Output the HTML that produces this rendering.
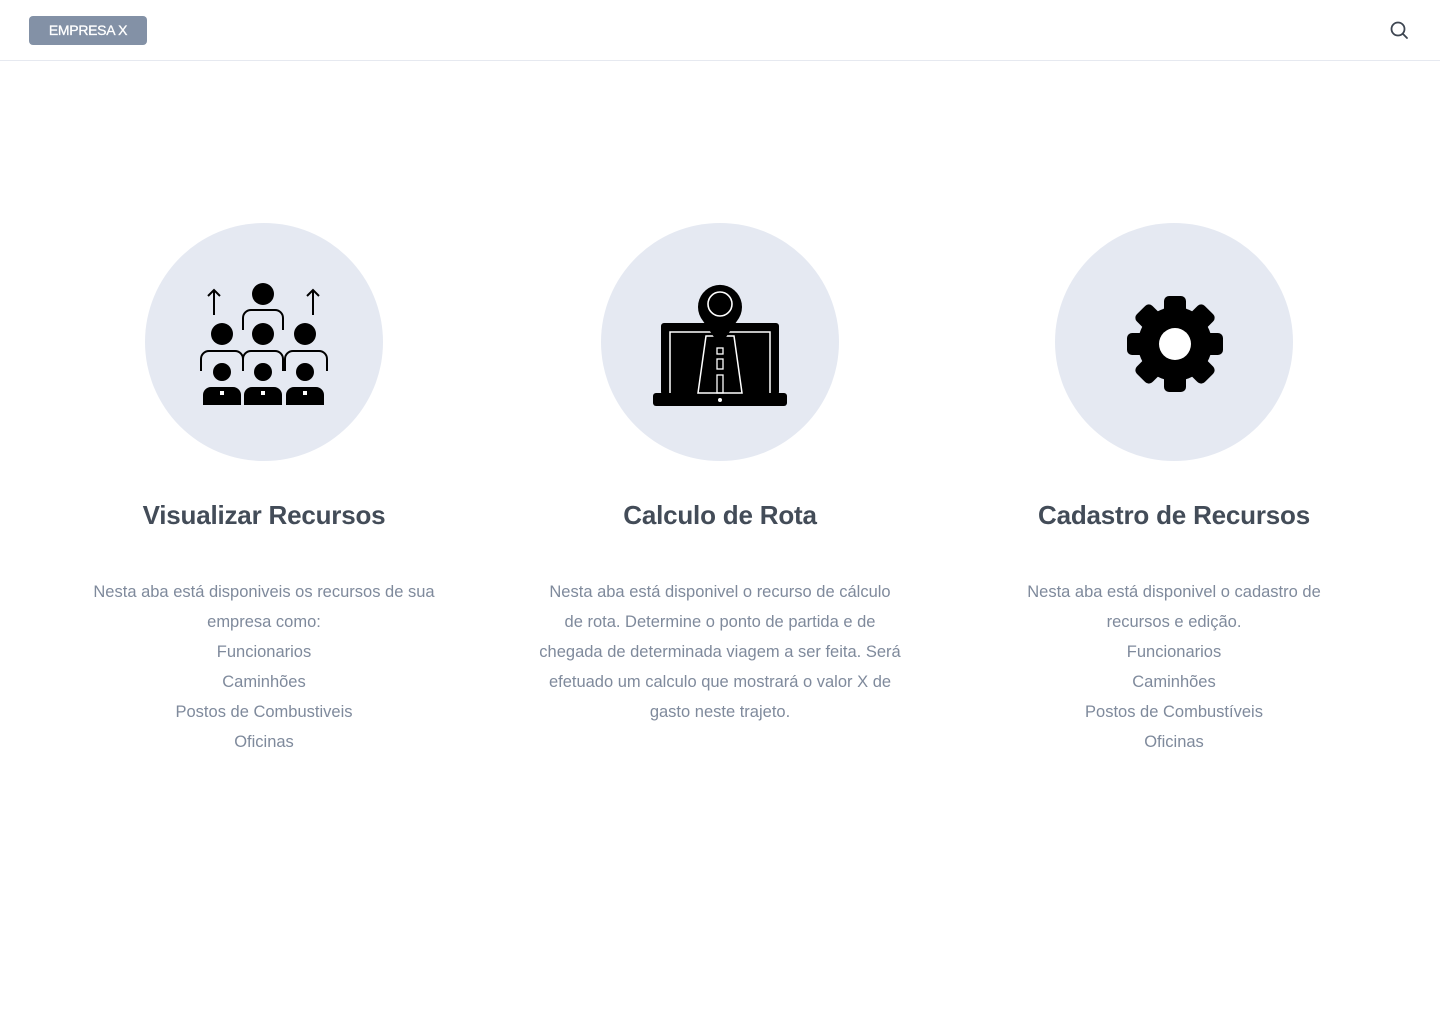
<!DOCTYPE html>
<html><head><meta charset="utf-8"><style>
*{margin:0;padding:0;box-sizing:border-box}
body{width:1440px;height:1024px;background:#fff;font-family:"Liberation Sans",sans-serif;position:relative;overflow:hidden}
.hdr{position:absolute;left:0;top:0;width:1440px;height:61px;border-bottom:1px solid #e6e9f0}
.brand{position:absolute;left:29px;top:16px;width:118px;height:29px;background:#8391a6;border-radius:4px;color:#fff;font-size:14px;line-height:29px;text-align:center;letter-spacing:-0.3px;-webkit-text-stroke:0.3px #fff}
.col{position:absolute;top:223px;width:420px;text-align:center}
.circ{width:238px;height:238px;border-radius:50%;background:#e5e9f2;margin:0 auto;position:relative}
.circ svg{position:absolute;left:0;top:0}
h2{margin-top:37px;font-size:26px;font-weight:bold;color:#434c58;line-height:34px;letter-spacing:-0.2px}
p{margin-top:45px;font-size:16.5px;color:#7f8a9c;line-height:30px}
</style></head><body>
<div class="hdr"><div class="brand">EMPRESA X</div>
<svg style="position:absolute;left:1388px;top:19px" width="22" height="22" viewBox="0 0 22 22"><circle cx="10" cy="10" r="6.5" fill="none" stroke="#3d4551" stroke-width="1.8"/><line x1="14.8" y1="14.8" x2="19" y2="19" stroke="#3d4551" stroke-width="1.8" stroke-linecap="round"/></svg>
</div>

<div class="col" style="left:54px">
<div class="circ"><svg width="238" height="238" viewBox="145 223 238 238">
<g fill="#000">
<circle cx="263" cy="294" r="11"/>
<circle cx="222" cy="334" r="11"/><circle cx="263" cy="334" r="11"/><circle cx="305" cy="334" r="11"/>
<circle cx="222" cy="372" r="9"/><circle cx="263" cy="372" r="9"/><circle cx="305" cy="372" r="9"/>
<path d="M203 405v-10a8 8 0 0 1 8-8h22a8 8 0 0 1 8 8v10z"/>
<path d="M244 405v-10a8 8 0 0 1 8-8h22a8 8 0 0 1 8 8v10z"/>
<path d="M286 405v-10a8 8 0 0 1 8-8h22a8 8 0 0 1 8 8v10z"/>
</g>
<g fill="#fff"><rect x="220" y="391" width="4" height="4"/><rect x="261" y="391" width="4" height="4"/><rect x="303" y="391" width="4" height="4"/></g>
<g fill="none" stroke="#000" stroke-width="2">
<path d="M243 330v-12a8 8 0 0 1 8-8h24a8 8 0 0 1 8 8v12"/>
<path d="M201 371v-12a8 8 0 0 1 8-8h26a8 8 0 0 1 8 8v12"/>
<path d="M243 371v-12a8 8 0 0 1 8-8h24a8 8 0 0 1 8 8v12"/>
<path d="M285 371v-12a8 8 0 0 1 8-8h26a8 8 0 0 1 8 8v12"/>
<path d="M214 315v-25M208 296l6-6 6 6M313 315v-25M307 296l6-6 6 6"/>
</g></svg></div>
<h2>Visualizar Recursos</h2>
<p>Nesta aba está disponiveis os recursos de sua<br>empresa como:<br>Funcionarios<br>Caminhões<br>Postos de Combustiveis<br>Oficinas</p>
</div>

<div class="col" style="left:510px">
<div class="circ"><svg width="238" height="238" viewBox="601 223 238 238">
<rect x="661" y="323" width="118" height="72" rx="3" fill="#000"/>
<rect x="670" y="332" width="100" height="62" fill="none" stroke="#fff" stroke-width="1.5"/>
<rect x="653" y="393" width="134" height="13" rx="3" fill="#000"/>
<circle cx="720" cy="400" r="2" fill="#fff"/>
<path d="M706 336L698 393h44l-8-57z" fill="#000" stroke="#fff" stroke-width="1.5"/>
<path d="M720 346L701 318a22 22 0 1 1 38 0z" fill="#000"/>
<circle cx="720" cy="304" r="12" fill="none" stroke="#fff" stroke-width="1.6"/>
<g fill="none" stroke="#fff" stroke-width="1.3"><rect x="717" y="348" width="6" height="6"/><rect x="717" y="359" width="6" height="10"/><rect x="717" y="375" width="6" height="18"/></g>
</svg></div>
<h2>Calculo de Rota</h2>
<p>Nesta aba está disponivel o recurso de cálculo<br>de rota. Determine o ponto de partida e de<br>chegada de determinada viagem a ser feita. Será<br>efetuado um calculo que mostrará o valor X de<br>gasto neste trajeto.</p>
</div>

<div class="col" style="left:964px">
<div class="circ"><svg width="238" height="238" viewBox="1055 223 238 238">
<g fill="#000" transform="translate(1175 344)">
<circle r="37"/>
<g id="t"><rect x="-11" y="-48" width="22" height="20" rx="5"/></g>
<use href="#t" transform="rotate(45)"/><use href="#t" transform="rotate(90)"/><use href="#t" transform="rotate(135)"/><use href="#t" transform="rotate(180)"/><use href="#t" transform="rotate(225)"/><use href="#t" transform="rotate(270)"/><use href="#t" transform="rotate(315)"/>
<circle r="16" fill="#fff"/>
</g></svg></div>
<h2>Cadastro de Recursos</h2>
<p>Nesta aba está disponivel o cadastro de<br>recursos e edição.<br>Funcionarios<br>Caminhões<br>Postos de Combustíveis<br>Oficinas</p>
</div>
</body></html>
